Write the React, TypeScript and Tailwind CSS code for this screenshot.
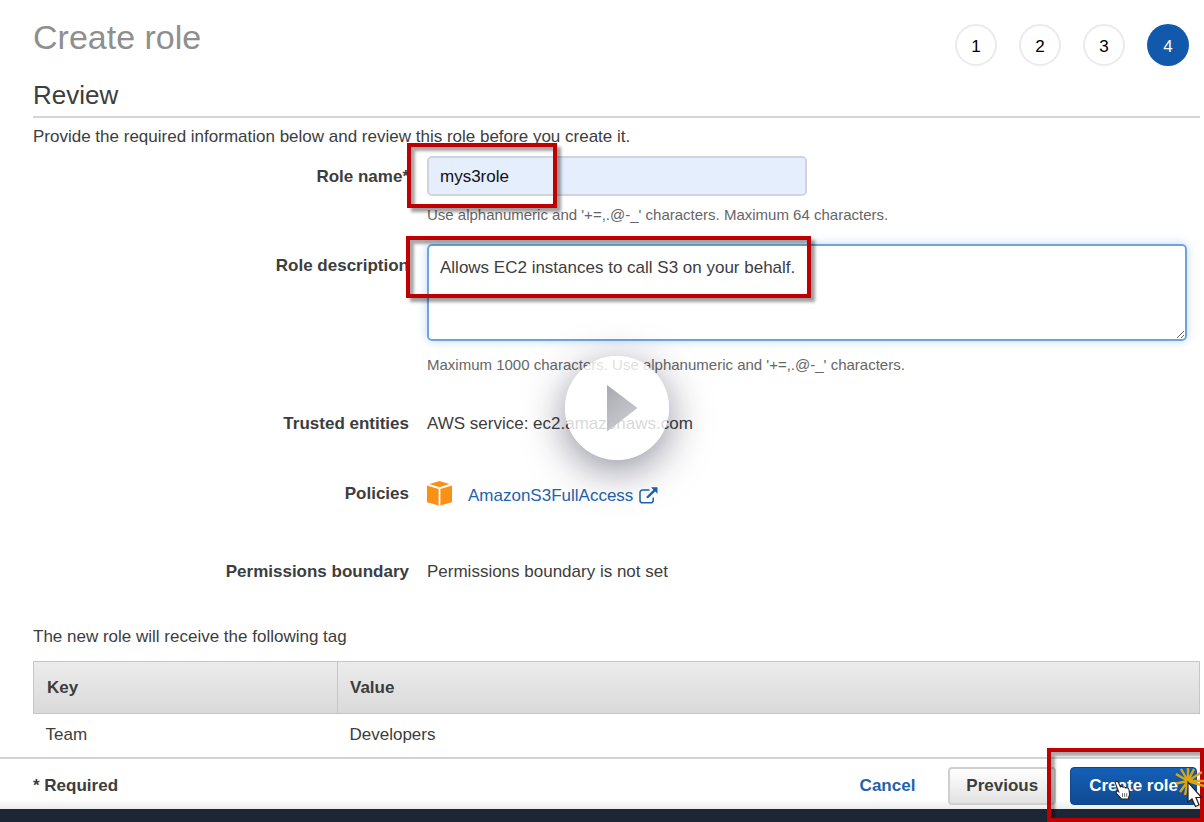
import type { ReactNode } from "react";

function Marker({ className }: { className: string }) {
  return (
    <div
      aria-hidden="true"
      className={`pointer-events-none absolute border-4 border-[#c00000] shadow-[4px_4px_3px_rgba(0,0,0,0.38),inset_4px_4px_3px_rgba(0,0,0,0.34)] ${className}`}
    />
  );
}

function Steps() {
  const current = 4;
  return (
    <ol className="flex gap-[22px]" aria-label="Steps">
      {[1, 2, 3, 4].map((n) => (
        <li
          key={n}
          aria-current={n === current ? "step" : undefined}
          className={
            n === current
              ? "flex size-[42px] items-center justify-center rounded-full bg-[#1259ab] pt-1 text-[17px] leading-5 text-white"
              : "flex size-[42px] items-center justify-center rounded-full border-2 border-[#ebebeb] pt-1 text-[17px] leading-5 text-black"
          }
        >
          {n}
        </li>
      ))}
    </ol>
  );
}

function Row({ label, children, className }: { label: string; children: ReactNode; className: string }) {
  return (
    <div className={`grid grid-cols-[376px_1fr] items-center gap-x-[18px] ${className}`}>
      <dt className="text-right font-bold">{label}</dt>
      <dd>{children}</dd>
    </div>
  );
}

function BoxIcon() {
  return (
    <svg viewBox="0 0 26 26" className="size-[26px]" fill="#fa9014" aria-hidden="true">
      <path d="M12.500 0 22.500 3 12.500 6.200 2.500 3Z" />
      <path d="M0 4.400 11.600 8V24.500L0 21.200Z" />
      <path d="M25 4.400 13.400 8V24.500L25 21.200Z" />
    </svg>
  );
}

function ExternalIcon() {
  return (
    <svg viewBox="0 0 20 18" className="h-[18px] w-5" aria-hidden="true">
      <path d="M10.5 3H3.600A2.600 2.600 0 0 0 1 5.600v7.600a2.600 2.600 0 0 0 2.600 2.600h8a2.600 2.600 0 0 0 2.600-2.600V10.500" fill="none" stroke="#1f62ad" strokeWidth="1.500" />
      <path d="M12 .3h6.500v6.500l-2.300-2.300-7.400 7-1.600-1.600 7.200-7.200z" fill="#1f62ad" />
    </svg>
  );
}

function PlayButton() {
  return (
    <button
      type="button"
      aria-label="Play video"
      className="absolute top-[356px] left-1/2 flex size-[104px] -translate-x-1/2 items-center justify-center rounded-full bg-white/80 shadow-[0_10px_40px_rgba(30,30,60,0.5)]"
    >
      <svg viewBox="0 0 104 104" className="size-[104px]" aria-hidden="true">
        <defs>
          <linearGradient id="play" x1="0" y1="0" x2="0.6" y2="1">
            <stop offset="0" stopColor="#9f9fa6" />
            <stop offset="1" stopColor="#c6c6ce" />
          </linearGradient>
        </defs>
        <path d="M42 29V75.500L72.500 52Z" fill="url(#play)" opacity="0.9" />
      </svg>
    </button>
  );
}

function HandCursor() {
  return (
    <svg viewBox="0 0 16 19" className="pointer-events-none absolute top-[13px] left-[44px] h-5 w-[17px]" aria-hidden="true">
      <path
        d="M1 2.500C1 .8 3.300.6 4 2.200L6 6.500C7 5.700 8.200 6 8.600 6.900 9.500 6.300 10.700 6.600 11.100 7.600 12.600 7 14 8 14.200 9.500L14.700 13.500 13.500 18H7L2.500 13C1.200 11.300 2.500 10 3.800 10.800L4.400 11.200Z"
        fill="#fff"
        stroke="#222"
        strokeWidth="1"
      />
      <path d="M8 12.500V16M10 12.500V16M12 12.500V16" stroke="#555" strokeWidth="0.8" />
    </svg>
  );
}

function ClickCursor() {
  return (
    <svg viewBox="0 0 32 44" className="pointer-events-none absolute -top-[3px] -right-[7px] h-11 w-8" aria-hidden="true">
      <path
        d="M16 17 4 19.500M16 17 4 10M16 17 9 5M16 17 16 4M16 17 22 5M16 17 30 8M16 17 32 17M16 17 8 28M16 17 13 31M16 17 32 22"
        stroke="#dba512"
        strokeWidth="2.400"
      />
      <path d="M16 18V38L20 35 23.500 42.500 27 41 24 33.500H29.500Z" fill="#fff" stroke="#222" strokeWidth="1.200" />
    </svg>
  );
}

export default function App() {
  return (
    <div className="flex min-h-screen flex-col overflow-hidden bg-white font-['Liberation_Sans',Arial,sans-serif] text-[17px] leading-5 text-[#3d3d3d]">
      <main className="pr-1 pl-[33px]">
        <div className="relative">
          <header className="flex items-start justify-between pt-6 pr-[11px]">
            <h1 className="-mt-1 text-[34px] leading-[34px] text-[#8f8f8f]">Create role</h1>
            <Steps />
          </header>
          <h2 className="mt-[13px] border-b-2 border-[#d4d4d4] pb-[5px] text-[26px] leading-8 text-[#3d3d3d]">Review</h2>
          <p className="mt-[9px]">Provide the required information below and review this role before you create it.</p>

          <form id="role-form">
            <div className="mt-[9px] grid grid-cols-[376px_1fr] gap-x-[18px]">
              <label htmlFor="role-name" className="mt-[11px] text-right font-bold">
                Role name*
              </label>
              <div className="relative">
                <input
                  id="role-name"
                  defaultValue="mys3role"
                  className="block h-10 w-[380px] rounded-[5px] border-2 border-[#d0d5dd] bg-[#e5eefc] px-[11px] pt-px text-[#111] outline-none"
                />
                <p className="mt-[9px] text-[15px] text-[#666]">
                  Use alphanumeric and '+=,.@-_' characters. Maximum 64 characters.
                </p>
                <Marker className="-top-[13px] -left-5 h-[65px] w-[150px]" />
              </div>
            </div>
            <div className="mt-[19px] grid grid-cols-[376px_1fr] gap-x-[18px]">
              <label htmlFor="role-description" className="mt-3 text-right font-bold">
                Role description
              </label>
              <div className="relative pr-[13px]">
                <textarea
                  id="role-description"
                  defaultValue="Allows EC2 instances to call S3 on your behalf."
                  className="block h-[97px] w-full rounded-[5px] border-2 border-[#6fa3dc] px-[11px] py-3 shadow-[0_0_10px_rgba(120,175,235,0.5)] outline-none"
                />
                <p className="mt-[14px] text-[15px] text-[#666]">
                  Maximum 1000 characters. Use alphanumeric and '+=,.@-_' characters.
                </p>
                <Marker className="-top-2 -left-[21px] h-[62px] w-[405px]" />
              </div>
            </div>
          </form>

          <dl>
            <Row label="Trusted entities" className="mt-[39px]">
              AWS service: ec2.amazonaws.com
            </Row>
            <Row label="Policies" className="mt-[47px]">
              <div className="flex items-center">
                <BoxIcon />
                <a href="#policy" className="mt-1 ml-[15px] flex items-center gap-[6px] text-[#1f62ad]">
                  AmazonS3FullAccess
                  <ExternalIcon />
                </a>
              </div>
            </Row>
            <Row label="Permissions boundary" className="mt-[55px]">
              Permissions boundary is not set
            </Row>
          </dl>

          <p className="mt-[45px]">The new role will receive the following tag</p>
          <table className="mt-[14px] w-full border-collapse text-left">
            <thead>
              <tr className="h-[52px] bg-linear-to-b from-[#ececec] to-[#d9d9d9]">
                <th className="w-[304px] border border-[#c6c6c6] px-[13px]">Key</th>
                <th className="border border-[#c6c6c6] px-3">Value</th>
              </tr>
            </thead>
            <tbody>
              <tr className="h-[42px]">
                <td className="px-3">Team</td>
                <td className="px-3">Developers</td>
              </tr>
            </tbody>
          </table>
          <PlayButton />
        </div>
      </main>

      <footer className="mt-auto border-b-[13px] border-[#1d2634]">
        <div className="relative flex h-[52px] items-center border-t-2 border-t-[#d2d2d2] bg-linear-to-b from-white from-80% to-[#ececec] pr-[7px] pl-[33px] font-bold">
          <span className="mt-1 mr-auto">* Required</span>
          <button type="button" className="mt-1 px-[33px] text-[#1f62ad]">
            Cancel
          </button>
          <button
            type="button"
            className="mt-1 h-[38px] rounded-[4px] border-2 border-[#cfcfcf] bg-linear-to-b from-white to-[#e2e2e2] px-4"
          >
            Previous
          </button>
          <div className="relative mt-1 ml-[14px]">
            <button
              type="submit"
              form="role-form"
              className="block h-[38px] rounded-[4px] border border-[#0f4687] bg-linear-to-b from-[#1460b8] to-[#104a91] px-[18px] text-white"
            >
              Create role
            </button>
            <Marker className="-top-[19px] -right-[7px] -left-[23px] h-[74px]" />
            <HandCursor />
            <ClickCursor />
          </div>
        </div>
      </footer>
    </div>
  );
}
